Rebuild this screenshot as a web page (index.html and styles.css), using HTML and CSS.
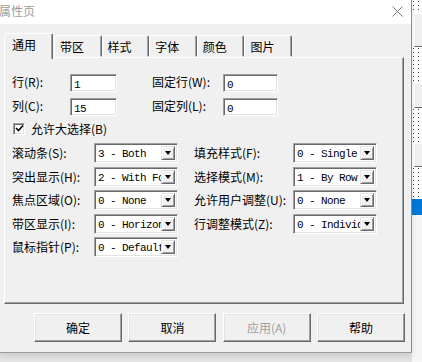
FILE: index.html
```html
<!DOCTYPE html>
<html lang="zh">
<head>
  <meta charset="UTF-8" />
  <title>属性页</title>
  <link rel="stylesheet" href="styles.css">
</head>
<body>
  <div class="screen">
    <div class="dialog">
      <div class="titlebar">
        <span class="title">属性页</span>
        <svg class="close" width="11" height="11" viewBox="0 0 11 11">
          <path d="M0.5 0.5L10.5 10.5M10.5 0.5L0.5 10.5" stroke="#7a7a7a" stroke-width="1" fill="none"/>
        </svg>
      </div>

      <div class="content">
        <div class="tabs">
          <div class="tab active">通用</div>
          <div class="tab">带区</div>
          <div class="tab">样式</div>
          <div class="tab">字体</div>
          <div class="tab">颜色</div>
          <div class="tab">图片</div>
        </div>

        <div class="panel">
          <div class="fields">
            <label>行(R):</label>
            <div class="edit">1</div>
            <label class="second">固定行(W):</label>
            <div class="edit">0</div>

            <label>列(C):</label>
            <div class="edit">15</div>
            <label class="second">固定列(L):</label>
            <div class="edit">0</div>
          </div>

          <div class="check">
            <span class="box">
              <svg width="9" height="9" viewBox="0 0 9 9">
                <path d="M1 4L3.5 6.5L8 1.5" stroke="#000" stroke-width="1.6" fill="none"/>
              </svg>
            </span>
            允许大选择(B)
          </div>

          <div class="combos">
            <label>滚动条(S):</label>
            <div class="combo"><span class="value">3 - Both</span><span class="arrow"></span></div>
            <label class="second">填充样式(F):</label>
            <div class="combo"><span class="value">0 - Single</span><span class="arrow"></span></div>

            <label>突出显示(H):</label>
            <div class="combo"><span class="value">2 - With Focus</span><span class="arrow"></span></div>
            <label class="second">选择模式(M):</label>
            <div class="combo"><span class="value">1 - By Row</span><span class="arrow"></span></div>

            <label>焦点区域(O):</label>
            <div class="combo"><span class="value">0 - None</span><span class="arrow"></span></div>
            <label class="second">允许用户调整(U):</label>
            <div class="combo"><span class="value">0 - None</span><span class="arrow"></span></div>

            <label>带区显示(I):</label>
            <div class="combo"><span class="value">0 - Horizontal</span><span class="arrow"></span></div>
            <label class="second">行调整模式(Z):</label>
            <div class="combo"><span class="value">0 - Individual</span><span class="arrow"></span></div>

            <label>鼠标指针(P):</label>
            <div class="combo"><span class="value">0 - Default</span><span class="arrow"></span></div>
          </div>
        </div>

        <div class="buttons">
          <button>确定</button>
          <button>取消</button>
          <button disabled>应用(A)</button>
          <button>帮助</button>
        </div>
      </div>
    </div>

    <div class="backdrop">
      <div class="dots" style="height: 13px"></div>
      <div class="btn" style="height: 34px"></div>
      <div class="dots" style="height: 36px"></div>
      <div class="btn" style="height: 25px"></div>
      <div class="dots" style="height: 35px"></div>
      <div class="btn" style="height: 24px"></div>
      <div class="dots" style="height: 32px"></div>
      <div class="selected"></div>
      <div class="empty"></div>
    </div>
  </div>
</body>
</html>
```

FILE: styles.css
```css
:root {
  --face: #f0f0f0;
  --light: #e3e3e3;
  --shadow: #a0a0a0;
  --dark: #696969;
  --cjk: "Noto Sans CJK SC", "Noto Sans", sans-serif;
  --mono: "Liberation Mono", "Noto Sans CJK SC", monospace;
}

* {
  margin: 0;
  padding: 0;
  box-sizing: border-box;
}

body {
  width: 422px;
  height: 362px;
  overflow: hidden;
  background: #e4e4e4;
  font-family: var(--cjk);
  font-size: 12px;
  color: #000;
}

.screen {
  display: flex;
  height: 362px;
}

/* dialog window */
.dialog {
  width: 412px;
  height: 353px;
  background: var(--face);
  border-right: 1px solid #8a8a8a;
  border-bottom: 1px solid #9a9a9a;
  box-shadow: 0 3px 6px rgba(0, 0, 0, 0.12);
  position: relative;
  z-index: 1;
}

.titlebar {
  height: 24px;
  background: #fff;
  display: flex;
  align-items: center;
  justify-content: space-between;
  padding-right: 8px;
}

.title {
  margin-left: -1px;
  margin-top: -2px;
  color: #9c9c9c;
  font-size: 12px;
  line-height: 14px;
}

.close {
  margin-top: -2px;
}

.content {
  padding: 9px 7px 0 4px;
}

/* tabs */
.tabs {
  display: flex;
  align-items: flex-end;
  height: 24px;
}

.tab {
  width: 47.6px;
  height: 22px;
  padding-left: 5px;
  line-height: 21px;
  background: var(--face);
  border: 1px solid;
  border-color: #fff var(--dark) transparent #fff;
  border-radius: 2px 2px 0 0;
  box-shadow: inset -1px 0 var(--shadow);
}

.tab.active {
  width: 49px;
  height: 26px;
  padding-left: 7px;
  line-height: 22px;
  margin-bottom: -2px;
  margin-right: 1px;
  border-bottom: none;
  position: relative;
  z-index: 2;
}

.panel {
  height: 247px;
  border: 1px solid;
  border-color: #fff var(--dark) var(--dark) #fff;
  box-shadow: inset -1px -1px var(--shadow);
  padding: 16px 0 0 7px;
}

label {
  display: flex;
  align-items: center;
  white-space: nowrap;
  line-height: 14px;
}

.second {
  padding-left: 35px;
}

/* edit boxes */
.fields {
  display: grid;
  grid-template-columns: 58px 47px 106px 55px;
  grid-auto-rows: 18px;
  row-gap: 6px;
}

.fields label {
  margin-top: -3px;
}

.edit,
.combo {
  background: #fff;
  border: 1px solid;
  border-color: var(--shadow) #fff #fff var(--shadow);
  box-shadow: inset 1px 1px var(--dark), inset -1px -1px var(--light);
  font-family: var(--mono);
  font-size: 11px;
  letter-spacing: -0.6px;
  line-height: 14px;
  padding: 3px 0 0 3px;
}

/* checkbox */
.check {
  display: flex;
  align-items: center;
  gap: 6px;
  height: 13px;
  margin-top: 6px;
  margin-left: 1px;
  line-height: 14px;
}

.box {
  width: 12px;
  height: 12px;
  background: #fff;
  border: 1px solid;
  border-color: var(--shadow) #fff #fff var(--shadow);
  box-shadow: inset 1px 1px var(--dark), inset -1px -1px var(--light);
  display: flex;
  align-items: center;
  justify-content: center;
}

/* combo boxes */
.combos {
  display: grid;
  grid-template-columns: 82px 84px 115px 84px;
  grid-auto-rows: 20px;
  row-gap: 3.5px;
  margin-top: 8px;
}

.combos .second {
  padding-left: 16px;
}

.combo {
  display: flex;
  padding: 2px 2px 2px 3px;
  line-height: 15px;
}

.combo .value {
  flex: 1;
  overflow: hidden;
  white-space: nowrap;
  padding-top: 1px;
}

.arrow {
  flex: none;
  width: 14px;
  background: var(--face);
  border: 1px solid;
  border-color: var(--light) var(--dark) var(--dark) var(--light);
  box-shadow: inset 1px 1px #fff, inset -1px -1px var(--shadow);
  display: flex;
  align-items: center;
  justify-content: center;
}

.arrow::after {
  content: "";
  border-left: 3.5px solid transparent;
  border-right: 3.5px solid transparent;
  border-top: 4px solid #000;
}

/* bottom buttons */
.buttons {
  display: flex;
  justify-content: flex-end;
  gap: 6.3px;
  margin-top: 9px;
  margin-right: -1px;
}

button {
  width: 88px;
  height: 29px;
  background: var(--face);
  border: 1px solid;
  border-color: #fff var(--dark) var(--dark) #fff;
  box-shadow: inset -1px -1px var(--shadow), inset 1px 1px var(--light);
  font-family: var(--cjk);
  font-size: 12px;
  color: #000;
}

button:disabled {
  color: #a0a0a0;
}

/* the app behind the dialog */
.backdrop {
  width: 10px;
  height: 362px;
  display: flex;
  flex-direction: column;
  background: #fff;
}

.dots {
  background: radial-gradient(circle at 1.5px 1.5px, #444 0.6px, transparent 0.8px) 0 0 / 5px 4px, #fff;
}

.btn {
  background: var(--face);
  border-top: 1px solid #fff;
  border-left: 1px solid #fff;
  border-bottom: 1px solid var(--dark);
  margin-left: 2px;
}

.selected {
  height: 16px;
  background: #0078d7;
}

.empty {
  flex: 1;
  background: #f6f6f6;
}
```
